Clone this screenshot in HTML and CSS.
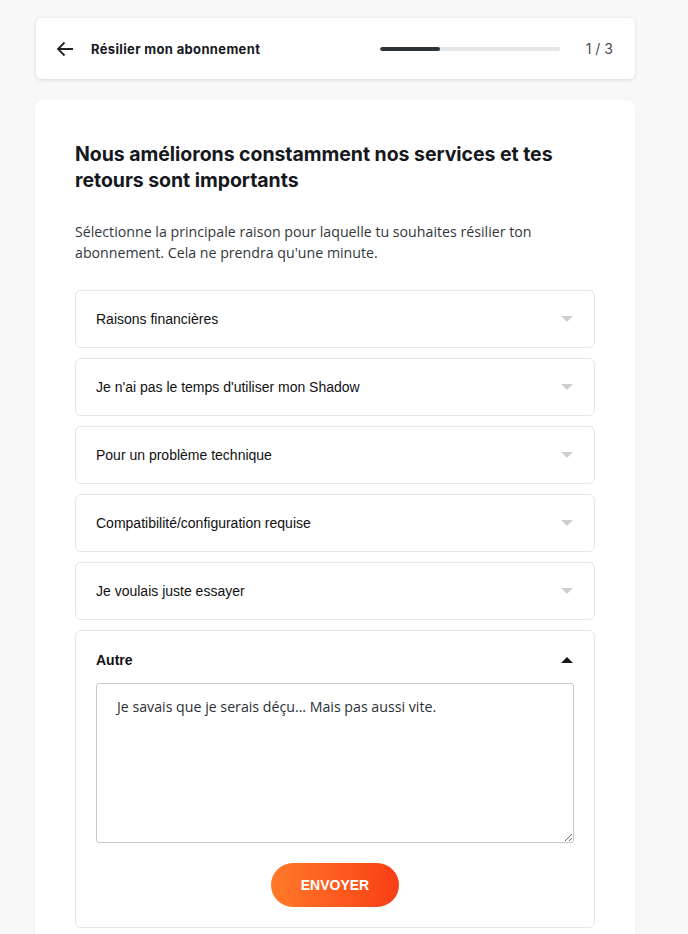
FILE: index.html
```html
<!DOCTYPE html>
<html lang="fr">
<head>
<meta charset="utf-8">
<title>Résilier mon abonnement</title>
<link rel="stylesheet" href="styles.css">
</head>
<body>
<div class="page">
  <header class="topbar">
    <button class="back" aria-label="Retour">
      <svg width="18" height="16" viewBox="0 0 18 16"><path d="M17 8H2M8.5 1.5L2 8l6.5 6.5" fill="none" stroke="#1f2329" stroke-width="1.8"/></svg>
    </button>
    <span class="topbar-title">Résilier mon abonnement</span>
    <div class="progress"><div class="progress-fill" style="width:33.3%"></div></div>
    <span class="step">1 / 3</span>
  </header>

  <main class="card">
    <h1 class="title">Nous améliorons constamment nos services et tes retours sont importants</h1>
    <p class="lead">Sélectionne la principale raison pour laquelle tu souhaites résilier ton abonnement. Cela ne prendra qu'une minute.</p>

    <div class="reasons">
      <div class="reason"><span>Raisons financières</span><i class="caret down"></i></div>
      <div class="reason"><span>Je n'ai pas le temps d'utiliser mon Shadow</span><i class="caret down"></i></div>
      <div class="reason"><span>Pour un problème technique</span><i class="caret down"></i></div>
      <div class="reason"><span>Compatibilité/configuration requise</span><i class="caret down"></i></div>
      <div class="reason"><span>Je voulais juste essayer</span><i class="caret down"></i></div>
      <div class="reason open">
        <div class="reason-head"><span>Autre</span><i class="caret up"></i></div>
        <textarea class="comment" spellcheck="false">Je savais que je serais déçu… Mais pas aussi vite.</textarea>
        <div class="actions"><button class="send">ENVOYER</button></div>
      </div>
    </div>
  </main>
</div>
</body>
</html>
```

FILE: styles.css
```css
* { box-sizing: border-box; }
html, body { margin: 0; padding: 0; }
body {
  background: #f8f8f8;
  font-family: "Liberation Sans", Arial, sans-serif;
  color: #1f2329;
}
.page {
  width: 600px;
  margin-left: 35px;
  padding-top: 18px;
}
.topbar {
  height: 61px;
  background: #fff;
  border-radius: 6px;
  box-shadow: 0 1px 4px rgba(0,0,0,0.12);
  display: flex;
  align-items: center;
  padding: 0 22px 0 20px;
  margin-left: 1px;
}
.back {
  background: none;
  border: 0;
  padding: 0;
  width: 18px;
  height: 16px;
  display: flex;
}
.topbar-title {
  margin-left: 17px;
  font-family: "Inter", sans-serif;
  font-weight: 700;
  font-size: 13px;
  letter-spacing: 0.35px;
  color: #15181d;
  flex: 1;
}
.progress {
  width: 180px;
  height: 4px;
  background: #e4e6e9;
  border-radius: 2px;
  overflow: hidden;
}
.progress-fill {
  height: 100%;
  background: #2d333b;
  border-radius: 2px;
}
.step {
  margin-left: 26px;
  font-family: "Inter", sans-serif;
  font-size: 14px;
  color: #4a4e55;
}
.card {
  margin-top: 21px;
  background: #fff;
  border-radius: 8px;
  box-shadow: 0 0 3px rgba(0,0,0,0.04);
  padding: 41px 40px 40px 40px;
}
.title {
  margin: 0;
  font-family: "Inter", sans-serif;
  font-weight: 700;
  font-size: 19.5px;
  line-height: 26px;
  color: #15181d;
  letter-spacing: -0.05px;
}
.lead {
  margin: 28px 0 0;
  font-family: "Open Sans", sans-serif;
  font-size: 14.2px;
  line-height: 21px;
  color: #33373d;
}
.reasons {
  margin-top: 27px;
  display: flex;
  flex-direction: column;
  gap: 10px;
}
.reason {
  border: 1px solid #e6e6e6;
  border-radius: 6px;
  min-height: 58px;
  padding: 0 21px 0 20px;
  display: flex;
  align-items: center;
  justify-content: space-between;
  font-size: 14px;
  color: #111;
}
.reason.open {
  display: block;
  padding: 19px 20px 20px 20px;
}
.reason-head {
  display: flex;
  align-items: center;
  justify-content: space-between;
  font-weight: 700;
  padding-right: 1px;
  height: 20px;
}
.caret {
  width: 0;
  height: 0;
  border-left: 6px solid transparent;
  border-right: 6px solid transparent;
}
.caret.down { border-top: 6px solid #cfcfcf; }
.caret.up { border-bottom: 6px solid #15181d; }
.comment {
  display: block;
  margin-top: 13px;
  width: 478px;
  height: 160px;
  border: 1px solid #c8c8c8;
  border-radius: 3px;
  padding: 13px 20px;
  font-family: "Open Sans", sans-serif;
  font-size: 14.2px;
  line-height: 20px;
  color: #2b2f35;
  resize: vertical;
}
.actions {
  display: flex;
  justify-content: center;
  margin-top: 20px;
}
.send {
  width: 128px;
  height: 44px;
  border: 0;
  border-radius: 22px;
  background: linear-gradient(90deg, #ff7a28 0%, #f93e16 100%);
  color: #fff;
  font-family: "Liberation Sans", Arial, sans-serif;
  font-weight: 700;
  font-size: 14px;
}
```
